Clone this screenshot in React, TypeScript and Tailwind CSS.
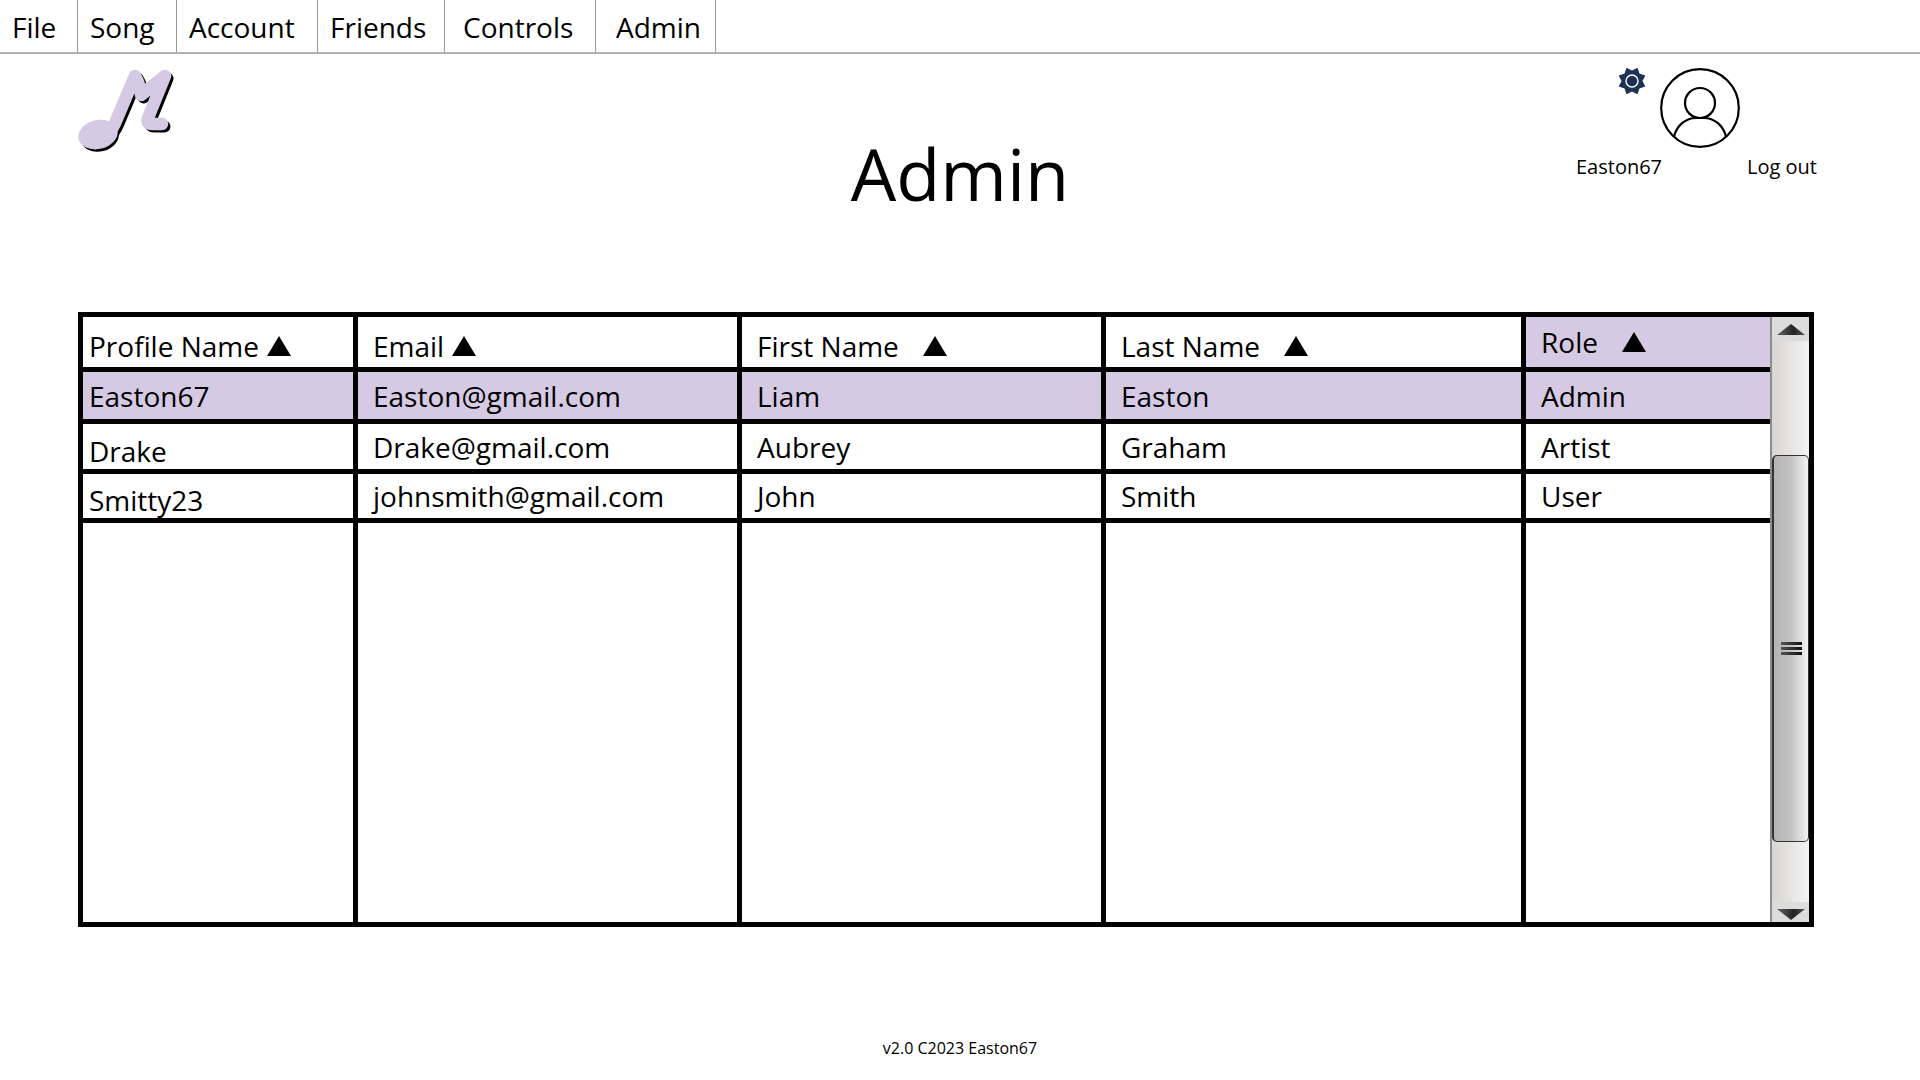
const menu = [
  { label: "File", cls: "w-[78px] pl-[12px]" },
  { label: "Song", cls: "w-[99px] pl-[12px]" },
  { label: "Account", cls: "w-[141px] pl-[12px]" },
  { label: "Friends", cls: "w-[127px] pl-[12px]" },
  { label: "Controls", cls: "w-[151px] pl-[18px]" },
  { label: "Admin", cls: "w-[120px] pl-[20px]" },
];

const columns = [
  { label: "Profile Name", cls: "w-[275px] pl-[6px] pt-2", gap: "gap-[8px]" },
  { label: "Email", cls: "w-[384px] pl-[15px] pt-2", gap: "gap-[8px]" },
  { label: "First Name", cls: "w-[364px] pl-[15px] pt-2", gap: "gap-[24px]" },
  { label: "Last Name", cls: "w-[420px] pl-[15px] pt-2", gap: "gap-[24px]" },
  { label: "Role", cls: "pl-[15px] bg-[#d5c9e3]", gap: "gap-[24px]" },
];

const rows = [
  {
    cls: "h-[52px] bg-[#d5c9e3]",
    first: "",
    cells: ["Easton67", "Easton@gmail.com", "Liam", "Easton", "Admin"],
  },
  {
    cls: "h-[50px]",
    first: "pt-2",
    cells: ["Drake", "Drake@gmail.com", "Aubrey", "Graham", "Artist"],
  },
  {
    cls: "h-[49px]",
    first: "pt-2",
    cells: ["Smitty23", "johnsmith@gmail.com", "John", "Smith", "User"],
  },
];

function Logo() {
  const note = "M20 70 C30 70 35 60 38 53 L57 8 Q62 16 63 27 L87 8 L70 50 Q68 56 74 56 L84 56";
  return (
    <svg className="h-[86px] w-[100px]" viewBox="0 0 100 86" fill="none" strokeLinejoin="round" strokeLinecap="round" aria-label="Music logo">
      <g transform="translate(2.5 2.5)" stroke="#000" strokeWidth="12">
        <path d={note} />
        <ellipse cx="19.500" cy="67" rx="19" ry="14" transform="rotate(-14 19.500 67)" fill="#000" stroke="none" />
      </g>
      <g stroke="#d5c9e3" strokeWidth="12.500">
        <path d={note} />
        <ellipse cx="20" cy="66.500" rx="20" ry="14.500" transform="rotate(-14 20 66.500)" fill="#d5c9e3" stroke="none" />
      </g>
    </svg>
  );
}

function Gear() {
  const points = Array.from({ length: 16 }, (_, i) => {
    const r = i % 2 === 0 ? 14.4 : 10.5;
    const a = ((i + 1) * Math.PI) / 8;
    return `${14 + r * Math.sin(a)},${14 - r * Math.cos(a)}`;
  }).join(" ");
  return (
    <svg className="h-7 w-7" viewBox="0 0 28 28">
      <polygon points={points} fill="#1f3256" />
      <circle cx="14" cy="14" r="6" fill="#1f3256" stroke="#fff" strokeWidth="1.4" />
    </svg>
  );
}

function Avatar() {
  return (
    <svg className="h-20 w-20" viewBox="0 0 80 80" fill="none" stroke="#000" strokeWidth="2.2">
      <circle cx="40" cy="40" r="38.8" />
      <circle cx="40" cy="35" r="15" />
      <path d="M14 68.500 C17 57 26 50 36 50 H44 C54 50 63 57 66 68.500" />
    </svg>
  );
}

export default function App() {
  return (
    <div className="flex min-h-screen flex-col bg-white font-['Open_Sans','Noto_Sans',sans-serif] font-[380] text-black">
      <nav className="flex h-[54px] border-b-2 border-[#b1b1b1] text-[28px] leading-[54px]">
        {menu.map((m) => (
          <a key={m.label} href="#" className={`border-r border-[#999] ${m.cls}`}>
            {m.label}
          </a>
        ))}
      </nav>

      <header className="grid grid-cols-[1fr_auto_1fr] px-[78px]">
        <div className="pt-[14px]">
          <Logo />
        </div>
        <h1 className="pt-[69px] text-[72px] leading-[100px]">Admin</h1>
        <div className="grid grid-cols-[84px_80px_80px] content-start justify-end pt-[13px] pr-[22px] text-[20px] leading-[28px]">
          <button aria-label="Settings" className="mr-[14px] self-start justify-self-end">
            <Gear />
          </button>
          <button aria-label="Profile" className="mt-[1px]">
            <Avatar />
          </button>
          <span />
          <span className="mt-[5px]">Easton67</span>
          <span />
          <a href="#" className="mt-[5px] pl-[7px]">
            Log out
          </a>
        </div>
      </header>

      <main className="mt-[89px] mr-[106px] ml-[78px] flex border-[5px] border-black">
        <table className="w-full table-fixed border-separate border-spacing-0 text-left text-[28px] leading-[36px]">
          <thead>
            <tr className="h-[55px]">
              {columns.map((c) => (
                <th key={c.label} scope="col" className={`border-r-[5px] border-b-[5px] border-black font-[380] last:border-r-0 ${c.cls}`}>
                  <button className={`flex items-center ${c.gap}`}>
                    {c.label}
                    <svg className="h-5 w-6" viewBox="0 0 24 20">
                      <path d="M12 0 L24 20 H0 Z" />
                    </svg>
                  </button>
                </th>
              ))}
            </tr>
          </thead>
          <tbody>
            {rows.map((r) => (
              <tr key={r.cells[0]} className={r.cls}>
                {r.cells.map((text, i) => (
                  <td
                    key={i}
                    className={`border-r-[5px] border-b-[5px] border-black last:border-r-0 ${i === 0 ? `pl-[6px] ${r.first}` : "pl-[15px]"}`}
                  >
                    {text}
                  </td>
                ))}
              </tr>
            ))}
            <tr className="h-[399px]">
              {columns.map((c) => (
                <td key={c.label} className="border-r-[5px] border-black last:border-r-0" />
              ))}
            </tr>
          </tbody>
        </table>

        <div className="flex w-[39px] shrink-0 flex-col border-l-2 border-[#8c8c8c] bg-linear-to-r from-[#d8d6d3] to-[#f3f3f3]">
          <button aria-label="Scroll up" className="flex h-6 items-center justify-center bg-[#dcdcdc]">
            <svg className="h-[11px] w-7" viewBox="0 0 28 11">
              <defs>
                <linearGradient id="arrow">
                  <stop offset="0" stopColor="#666" />
                  <stop offset="0.6" stopColor="#222" />
                  <stop offset="1" stopColor="#555" />
                </linearGradient>
              </defs>
              <path d="M14 0 L28 11 H0 Z" fill="url(#arrow)" />
            </svg>
          </button>
          <div className="grow-114 basis-0" />
          <div className="flex grow-387 basis-0 flex-col items-center justify-center gap-[2px] rounded-[5px] border border-l-2 border-[#333] bg-linear-to-r from-[#b4b4b4] via-[#c3c3c3] to-[#f4f4f4]">
            <span className="h-[3px] w-[21px] bg-linear-to-r from-[#555] to-[#111]" />
            <span className="h-[3px] w-[21px] bg-linear-to-r from-[#555] to-[#111]" />
            <span className="h-[3px] w-[21px] bg-linear-to-r from-[#555] to-[#111]" />
          </div>
          <div className="grow-60 basis-0" />
          <button aria-label="Scroll down" className="flex h-5 items-end justify-center bg-[#dcdcdc] pb-[2px]">
            <svg className="h-[11px] w-7" viewBox="0 0 28 11">
              <path d="M14 11 L28 0 H0 Z" fill="url(#arrow)" />
            </svg>
          </button>
        </div>
      </main>

      <footer className="mt-auto pb-[20px] text-center text-[16px] leading-[24px]">v2.0 C2023 Easton67</footer>
    </div>
  );
}
